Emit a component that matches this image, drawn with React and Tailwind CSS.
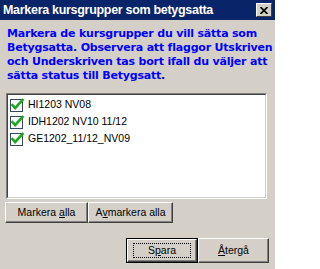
import React from "react";

function Check() {
  return (
    <svg width="14" height="14" viewBox="0 0 14 14" className="shrink-0">
      <rect x="0.5" y="1.5" width="12" height="12" fill="#ffffff" stroke="#34495e" />
      <path d="M2.5 7 L5.2 10 L12.5 2" fill="none" stroke="#1fa61f" strokeWidth="2.6" strokeLinecap="square" />
    </svg>
  );
}

function Btn({ children, className = "" }) {
  return (
    <div className={`flex items-center justify-center bg-[#d4d0c8] border border-t-white border-l-white border-r-[#404040] border-b-[#404040] shadow-[inset_-1px_-1px_0_#808080] text-[10.5px] text-black ${className}`}>
      {children}
    </div>
  );
}

export default function App() {
  const items = ["HI1203 NV08", "IDH1202 NV10 11/12", "GE1202_11/12_NV09"];
  return (
    <div className="w-[275px] h-[269px] bg-[#d4d0c8] overflow-hidden flex flex-col" style={{ fontFamily: '"Liberation Sans", Arial, sans-serif' }}>
      <div className="h-[20px] bg-[#0a246a] flex items-center justify-between pl-[3px] pr-[3px]">
        <span className="text-white font-bold text-[12.5px] leading-none tracking-[-0.3px] whitespace-nowrap">Markera kursgrupper som betygsatta</span>
        <div className="w-[16px] h-[14px] bg-[#d4d0c8] border border-t-white border-l-white border-r-[#404040] border-b-[#404040] flex items-center justify-center">
          <svg width="8" height="7" viewBox="0 0 8 7">
            <path d="M0.5 0 L7.5 7 M7.5 0 L0.5 7" stroke="#000" strokeWidth="1.6" />
          </svg>
        </div>
      </div>
      <div className="px-[7px] pt-[7px] text-[#0000ff] font-bold text-[11px] leading-[14px] tracking-[-0.2px] whitespace-nowrap" style={{ fontFamily: '"DejaVu Sans", sans-serif' }}>
        Markera de kursgrupper du vill sätta som<br />
        Betygsatta. Observera att flaggor Utskriven<br />
        och Underskriven tas bort ifall du väljer att<br />
        sätta status till Betygsatt.
      </div>
      <div className="ml-[6px] mt-[10px] w-[261px] h-[106px] border border-t-[#808080] border-l-[#808080] border-r-white border-b-white">
        <div className="w-full h-full bg-white border border-t-[#404040] border-l-[#404040] border-r-[#d4d0c8] border-b-[#d4d0c8] pt-[1px] pl-[2px] flex flex-col">
          {items.map((t) => (
            <div key={t} className="h-[17px] flex items-center gap-[4px] text-[10.5px] text-black">
              <Check />
              <span>{t}</span>
            </div>
          ))}
        </div>
      </div>
      <div className="ml-[5px] mt-[3px] flex">
        <Btn className="w-[83px] h-[21px]">Markera&nbsp;<span className="underline">a</span>lla</Btn>
        <Btn className="w-[85px] h-[21px]">A<span className="underline">v</span>markera alla</Btn>
      </div>
      <div className="mt-[15px] flex justify-end pr-[6px]">
        <div className="w-[72px] h-[25px] border border-black">
          <Btn className="w-full h-full">
            <div className="w-[58px] h-[15px] border border-dotted border-black flex items-center justify-center">
              S<span className="underline">p</span>ara
            </div>
          </Btn>
        </div>
        <Btn className="w-[71px] h-[25px]"><span className="underline">Å</span>tergå</Btn>
      </div>
    </div>
  );
}
